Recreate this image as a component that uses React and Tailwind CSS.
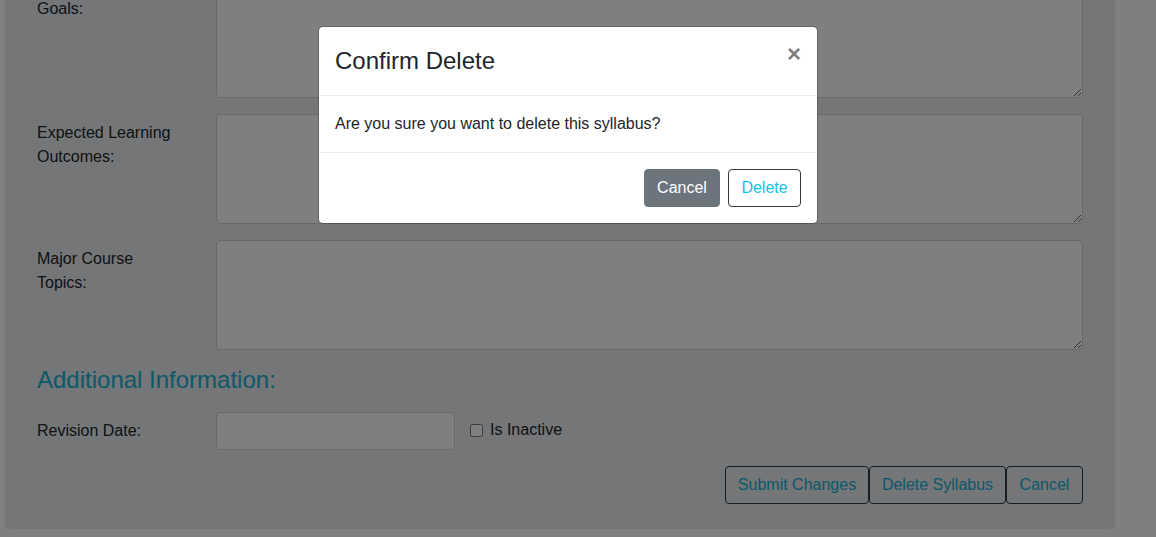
import React from "react";

const font = { fontFamily: '"Liberation Sans", Arial, sans-serif' };

function FieldRow({ label, height, className = "" }) {
  return (
    <div className={`flex ${className}`}>
      <label className="w-[179px] shrink-0 pt-[7px] pr-[34px] text-base leading-6 text-[#212529]">
        {label}
      </label>
      <textarea
        className={`flex-1 rounded-[4px] border border-[#ced4da] bg-white px-3 py-[6px] ${height}`}
      />
    </div>
  );
}

export default function App() {
  return (
    <div className="relative h-[537px] overflow-hidden bg-white" style={font}>
      {/* Page, scrolled to the bottom */}
      <div className="flex h-full flex-col justify-end pb-[8px]">
        <div className="ml-[5px] w-[1110px] rounded-[5px] bg-[#e9ecef] px-8 pb-[25px]">
          <FieldRow label="Goals:" height="h-[108px]" className="mb-[16px]" />
          <FieldRow label="Expected Learning Outcomes:" height="h-[110px]" className="mb-[16px]" />
          <FieldRow label="Major Course Topics:" height="h-[110px]" />

          <h3 className="mt-[14px] mb-[16px] text-2xl leading-[32px] text-[#17b2d6]">
            Additional Information:
          </h3>

          <div className="flex items-center">
            <label className="w-[179px] shrink-0 text-base leading-6 text-[#212529]">
              Revision Date:
            </label>
            <input
              type="text"
              className="h-[38px] w-[239px] rounded-[4px] border border-[#ced4da] bg-white px-3"
            />
            <label className="ml-[15px] -mt-[2px] flex items-center gap-[7px] text-base text-[#212529]">
              <input type="checkbox" className="m-0 h-[13px] w-[13px]" />
              Is Inactive
            </label>
          </div>

          <div className="mt-[16px] flex justify-end">
            <button className="h-[38px] w-[144px] rounded-[4px] border border-[#343a40] text-base text-[#17b2d6]">
              Submit Changes
            </button>
            <button className="h-[38px] w-[137px] rounded-[4px] border border-[#343a40] text-base text-[#17b2d6]">
              Delete Syllabus
            </button>
            <button className="h-[38px] w-[77px] rounded-[4px] border border-[#343a40] text-base text-[#17b2d6]">
              Cancel
            </button>
          </div>
        </div>
      </div>

      {/* Backdrop */}
      <div className="absolute inset-0 bg-black/50" />

      {/* Modal */}
      <div className="absolute left-[318px] top-[26px] w-[500px] rounded-[5px] border border-black/20 bg-white bg-clip-padding">
        <div className="flex items-start justify-between border-b border-[#e9ecef] p-4">
          <h4 className="text-2xl leading-9 text-[#212529]">Confirm Delete</h4>
          <button className="-mt-[1px] mr-0 text-2xl font-bold leading-none text-black opacity-50">
            ×
          </button>
        </div>
        <div className="p-4 text-base leading-6 text-[#212529]">
          Are you sure you want to delete this syllabus?
        </div>
        <div className="flex justify-end gap-2 border-t border-[#e9ecef] p-4">
          <button className="h-[38px] w-[76px] rounded-[4px] border border-[#6c757d] bg-[#6c757d] text-base text-white">
            Cancel
          </button>
          <button className="h-[38px] w-[73px] rounded-[4px] border border-[#343a40] bg-white text-base text-[#17c1f0]">
            Delete
          </button>
        </div>
      </div>
    </div>
  );
}
